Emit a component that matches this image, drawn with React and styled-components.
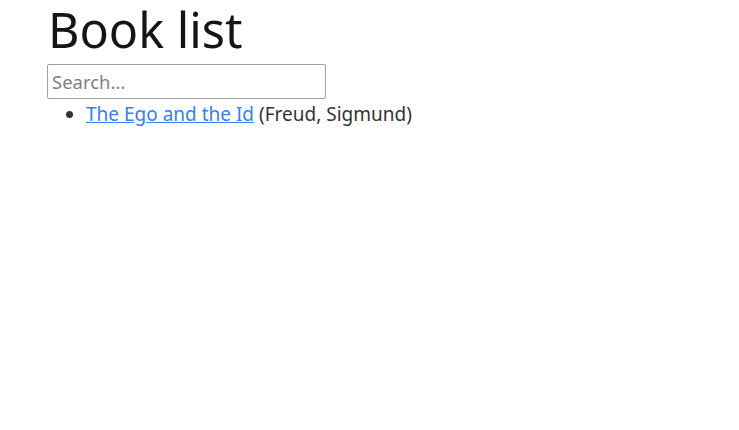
import React from 'react'
import styled, { createGlobalStyle } from 'styled-components'

const Global = createGlobalStyle`
  html, body {
    margin: 0;
    padding: 0;
    background: #fff;
  }
  body {
    font-family: "Noto Sans", "DejaVu Sans", sans-serif;
    color: #222;
  }
`;

const Page = styled.div`
  padding: 0 48px;
`;

const Title = styled.h1`
  margin: 0;
  padding-top: 1px;
  font-size: 48.5px;
  font-weight: 400;
  line-height: 57px;
  color: #151515;
`;

const Search = styled.input`
  display: block;
  box-sizing: border-box;
  margin: 6px 0 0 -1px;
  width: 279px;
  height: 35px;
  padding: 0 4px;
  border: 1.5px solid #a0a0a0;
  border-radius: 2px;
  font-family: "Noto Sans", sans-serif;
  font-size: 18.5px;
  color: #222;

  &::placeholder {
    color: #808080;
  }
`;

const List = styled.ul`
  margin: 2px 0 0;
  padding-left: 38px;
  font-size: 19px;
  line-height: 27px;
`;

const Item = styled.li`
  color: #333;
`;

const Link = styled.a`
  color: #3580f2;
  text-decoration: underline;
`;

const books = [
  { title: 'The Ego and the Id', author: 'Freud, Sigmund' },
];

const App = () => {
  return (
    <Page>
      <Global />
      <Title>Book list</Title>
      <Search placeholder="Search..." />
      <List>
        {books.map(b => (
          <Item key={b.title}>
            <Link href="#">{b.title}</Link> ({b.author})
          </Item>
        ))}
      </List>
    </Page>
  )
}

export default App
